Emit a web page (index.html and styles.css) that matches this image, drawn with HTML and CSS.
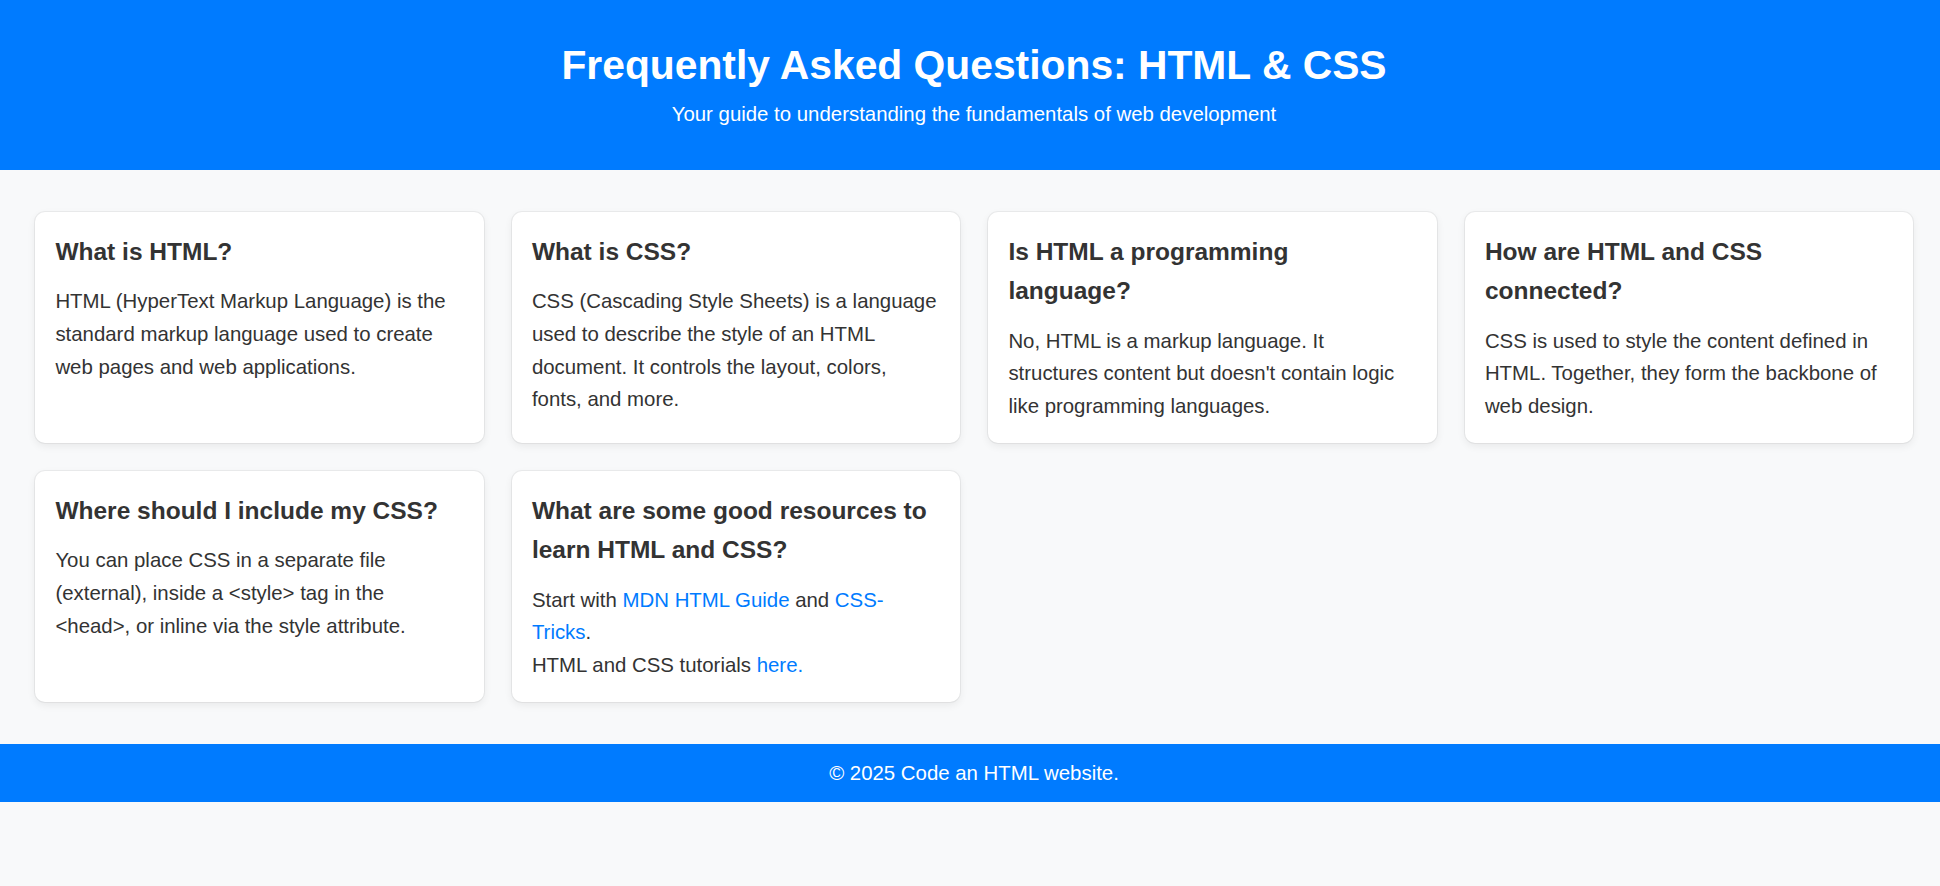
FILE: index.html
```html
<!DOCTYPE html>
<html lang="en">
<head>
  <meta charset="UTF-8">
  <meta name="viewport" content="width=device-width, initial-scale=1.0">
  <title>FAQ: HTML &amp; CSS</title>
  <link rel="stylesheet" href="styles.css">
</head>
<body>
  <header class="site-header">
    <h1>Frequently Asked Questions: HTML &amp; CSS</h1>
    <p>Your guide to understanding the fundamentals of web development</p>
  </header>

  <main class="faq-grid">
    <div class="faq-item">
      <h3>What is HTML?</h3>
      <p>HTML (HyperText Markup Language) is the standard markup language used to create web pages and web applications.</p>
    </div>
    <div class="faq-item">
      <h3>What is CSS?</h3>
      <p>CSS (Cascading Style Sheets) is a language used to describe the style of an HTML document. It controls the layout, colors, fonts, and more.</p>
    </div>
    <div class="faq-item">
      <h3>Is HTML a programming language?</h3>
      <p>No, HTML is a markup language. It structures content but doesn't contain logic like programming languages.</p>
    </div>
    <div class="faq-item">
      <h3>How are HTML and CSS connected?</h3>
      <p>CSS is used to style the content defined in HTML. Together, they form the backbone of web design.</p>
    </div>
    <div class="faq-item">
      <h3>Where should I include my CSS?</h3>
      <p>You can place CSS in a separate file (external), inside a &lt;style&gt; tag in the &lt;head&gt;, or inline via the style attribute.</p>
    </div>
    <div class="faq-item">
      <h3>What are some good resources to learn HTML and CSS?</h3>
      <p>Start with <a href="#">MDN HTML Guide</a> and <a href="#">CSS-Tricks</a>.<br>HTML and CSS tutorials <a href="#">here.</a></p>
    </div>
  </main>

  <footer class="site-footer">
    <p>&copy; 2025 Code an HTML website.</p>
  </footer>
</body>
</html>
```

FILE: styles.css
```css
body {
  font-family: "Liberation Sans", Arial, sans-serif;
  font-size: 20.4px;
  line-height: 1.6;
  margin: 0;
  background-color: #f8f9fa;
  color: #333;
}
.site-header {
  background-color: #007bff;
  color: #fff;
  text-align: center;
  padding: 41.8px 20px 39.8px 28px;
}
.site-header h1 {
  font-size: 40.8px;
  line-height: 1.15;
  margin: 0 0 9px;
}
.site-header p {
  margin: 0;
}
.faq-grid {
  display: grid;
  grid-template-columns: repeat(4, 1fr);
  gap: 28px;
  padding: 41.7px 27px 41.7px 35px;
}
.faq-item {
  background: #fff;
  padding: 20.4px;
  border-radius: 10px;
  box-shadow: 0 0 0 1px rgba(0, 0, 0, 0.05), 0 3px 8px rgba(0, 0, 0, 0.07);
}
.faq-item h3 {
  font-size: 24.5px;
  margin: 0 0 14px;
  color: #333;
}
.faq-item p {
  margin: 0;
}
.faq-item a {
  color: #007bff;
  text-decoration: none;
}
.site-footer {
  background-color: #007bff;
  color: #fff;
  text-align: center;
  padding: 17px 20px 17px 28px;
}
.site-footer p {
  margin: 0;
  line-height: 24px;
}
```
